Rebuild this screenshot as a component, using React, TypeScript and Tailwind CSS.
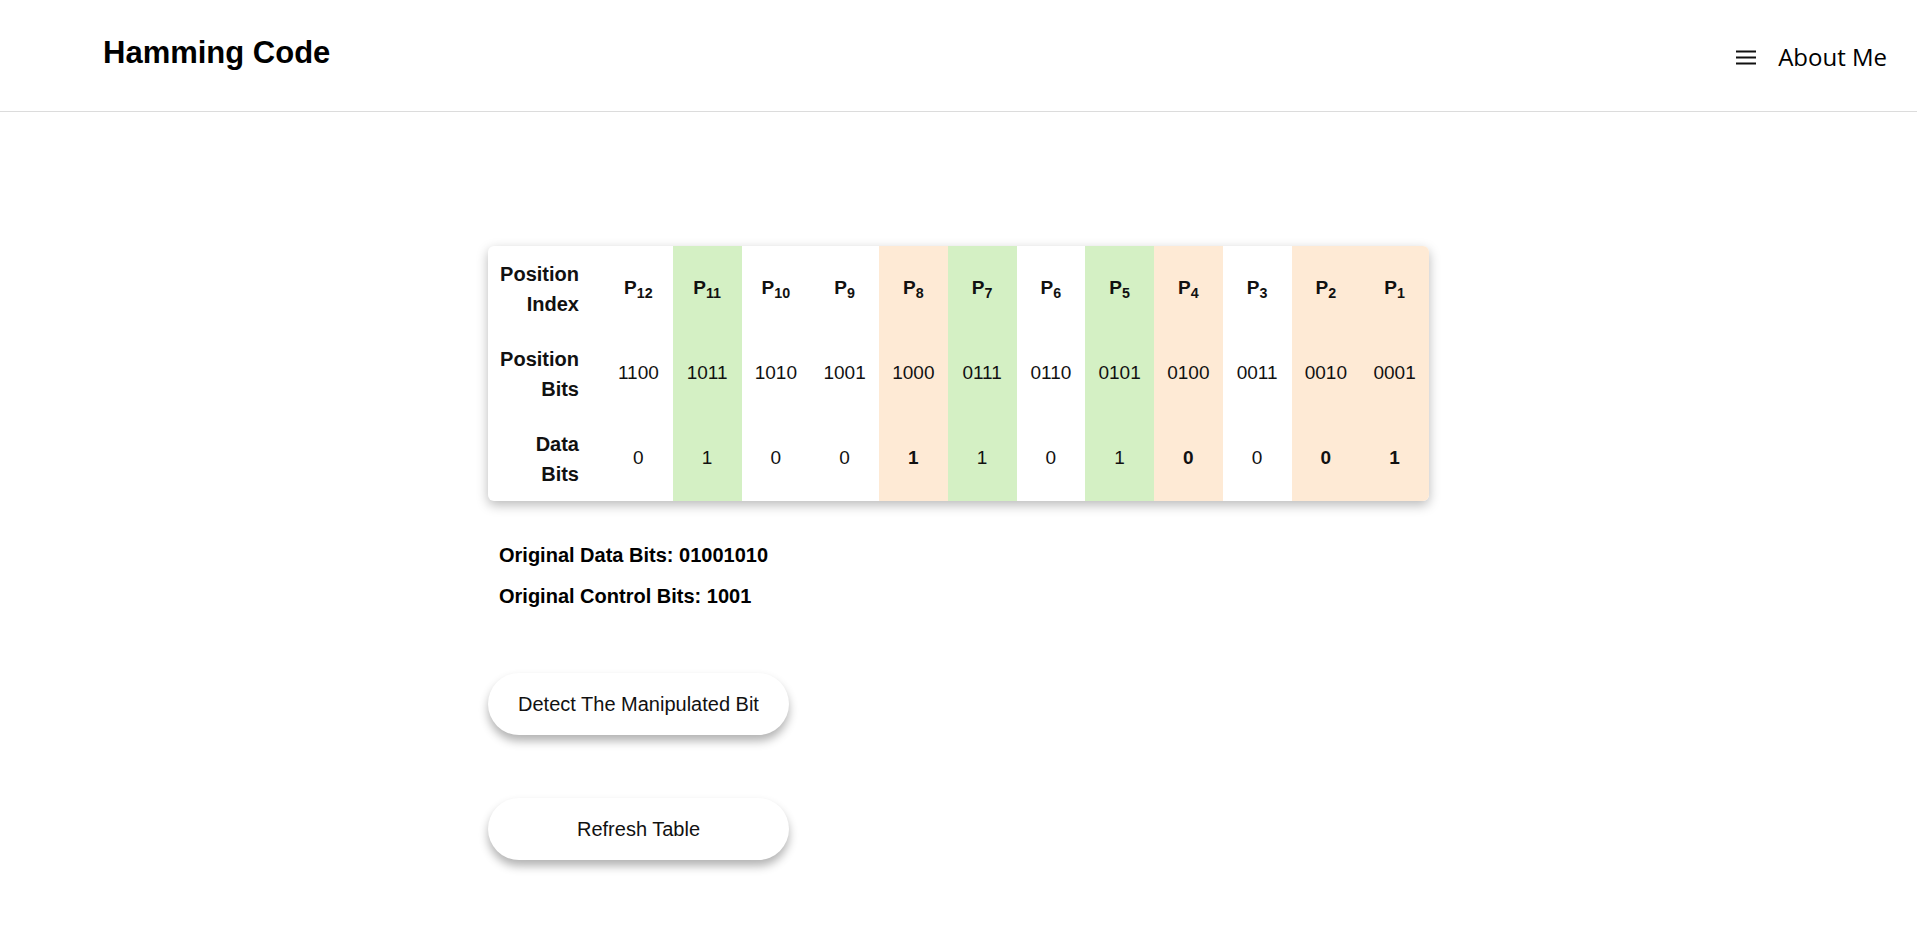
import React from 'react';

type Col = { n: number; bits: string; data: string; tone: 'white' | 'green' | 'orange' };

const cols: Col[] = [
  { n: 12, bits: '1100', data: '0', tone: 'white' },
  { n: 11, bits: '1011', data: '1', tone: 'green' },
  { n: 10, bits: '1010', data: '0', tone: 'white' },
  { n: 9, bits: '1001', data: '0', tone: 'white' },
  { n: 8, bits: '1000', data: '1', tone: 'orange' },
  { n: 7, bits: '0111', data: '1', tone: 'green' },
  { n: 6, bits: '0110', data: '0', tone: 'white' },
  { n: 5, bits: '0101', data: '1', tone: 'green' },
  { n: 4, bits: '0100', data: '0', tone: 'orange' },
  { n: 3, bits: '0011', data: '0', tone: 'white' },
  { n: 2, bits: '0010', data: '0', tone: 'orange' },
  { n: 1, bits: '0001', data: '1', tone: 'orange' },
];

const toneClass = {
  white: 'bg-white',
  green: 'bg-[#d4f0c4]',
  orange: 'bg-[#feead5]',
};

const Label: React.FC<{ a: string; b: string }> = ({ a, b }) => (
  <th className="w-[116px] min-w-[116px] pl-3 pr-[25px] text-right align-middle text-[20px] font-bold leading-[30px]">
    {a}
    <br />
    {b}
  </th>
);

const App: React.FC = () => {
  return (
    <div className="min-h-screen bg-white text-[#111] font-['Liberation_Sans',Arial,sans-serif]">
      {/* Header */}
      <header className="flex h-[112px] items-center justify-between border-b border-[#dcdcdc] pl-[103px] pr-[30px] pb-[4px]">
        <h1 className="text-[31px] font-bold text-black">Hamming Code</h1>
        <nav className="flex items-center gap-[22px] pt-[6px] font-['Open_Sans',sans-serif] text-[24px] text-black">
          <svg width="20" height="15" viewBox="0 0 20 15" className="mt-[2px]">
            <path d="M0 1.5h20M0 7.5h20M0 13.5h20" stroke="#111" strokeWidth="2" />
          </svg>
          <span>About Me</span>
        </nav>
      </header>

      <main className="mx-auto w-fit pt-[134px] pb-16">
        {/* Table */}
        <div className="overflow-hidden rounded-md bg-white shadow-[0_4px_12px_rgba(0,0,0,0.28)]">
          <table className="table-fixed border-collapse">
            <tbody>
              <tr className="h-[85px]">
                <Label a="Position" b="Index" />
                {cols.map((c) => (
                  <td key={c.n} className={`w-[68.75px] text-center text-[19px] font-bold ${toneClass[c.tone]}`}>
                    P<sub>{c.n}</sub>
                  </td>
                ))}
              </tr>
              <tr className="h-[85px]">
                <Label a="Position" b="Bits" />
                {cols.map((c) => (
                  <td key={c.n} className={`text-center text-[19px] ${toneClass[c.tone]}`}>
                    {c.bits}
                  </td>
                ))}
              </tr>
              <tr className="h-[85px]">
                <Label a="Data" b="Bits" />
                {cols.map((c) => (
                  <td
                    key={c.n}
                    className={`text-center text-[19px] ${c.tone === 'orange' ? 'font-bold' : ''} ${toneClass[c.tone]}`}
                  >
                    {c.data}
                  </td>
                ))}
              </tr>
            </tbody>
          </table>
        </div>

        {/* Summary */}
        <div className="pl-[11px] pt-[39px] text-[20px] font-bold leading-[30px] text-black">
          <p>Original Data Bits: 01001010</p>
          <p className="mt-[11px]">Original Control Bits: 1001</p>
        </div>

        {/* Actions */}
        <div className="flex flex-col gap-[63px] pt-[62px]">
          <button className="h-[62px] w-[301px] rounded-full bg-white text-[20px] text-[#111] shadow-[0_6px_10px_rgba(0,0,0,0.3)]">
            Detect The Manipulated Bit
          </button>
          <button className="h-[62px] w-[301px] rounded-full bg-white text-[20px] text-[#111] shadow-[0_6px_10px_rgba(0,0,0,0.3)]">
            Refresh Table
          </button>
        </div>
      </main>
    </div>
  );
};

export default App;
